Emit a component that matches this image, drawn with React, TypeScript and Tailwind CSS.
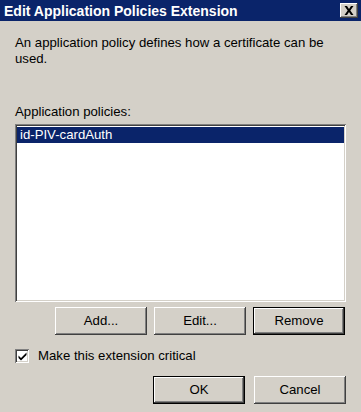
const raised =
  "shadow-[inset_-1px_-1px_#404040,inset_1px_1px_#ffffff,inset_-2px_-2px_#808080,inset_2px_2px_#d4d0c8]";
const raisedDefault =
  "border border-black shadow-[inset_-1px_-1px_#404040,inset_1px_1px_#ffffff,inset_-2px_-2px_#808080]";
const sunken =
  "shadow-[inset_1px_1px_#808080,inset_-1px_-1px_#ffffff,inset_2px_2px_#404040,inset_-2px_-2px_#d4d0c8]";

function Button({ label, isDefault }: { label: string; isDefault?: boolean }) {
  return (
    <button
      className={
        "w-[92px] h-[28px] bg-[#d4d0c8] text-black text-[13.2px] flex items-center justify-center " +
        (isDefault ? raisedDefault : raised)
      }
    >
      {label}
    </button>
  );
}

export default function App() {
  return (
    <div
      className="w-[361px] h-[412px] bg-[#d4d0c8] flex flex-col text-black overflow-hidden"
      style={{ fontFamily: '"Liberation Sans", Arial, sans-serif' }}
    >
      {/* Title bar */}
      <div className="h-[21px] bg-[#0a246a] flex items-center pl-[4px] pr-[3px]">
        <span className="flex-1 text-white font-bold text-[14px] leading-none">
          Edit Application Policies Extension
        </span>
        <div
          className={
            "w-[18px] h-[15px] bg-[#d4d0c8] flex items-center justify-center " + raised
          }
        >
          <svg width="10" height="9" viewBox="0 0 10 9">
            <path d="M0.5 0h2.5l2 3 2-3h2.5l-3.2 4.5 3.2 4.5H7l-2-3-2 3H0.5l3.2-4.5z" fill="#000" />
          </svg>
        </div>
      </div>

      <div className="flex-1 flex flex-col px-[15px] text-[13.2px] leading-[16px]">
        <p className="mt-[14px] pr-[20px]">
          An application policy defines how a certificate can be used.
        </p>

        <div className="mt-[37px]">Application policies:</div>

        <div className={"mt-[4px] h-[178px] bg-white pt-[3px] px-[2px] " + sunken}>
          <div className="h-[16px] bg-[#0a246a] text-white pl-[3px] leading-[16px]">
            id-PIV-cardAuth
          </div>
        </div>

        <div className="mt-[5px] flex justify-end gap-[7px] pr-[1px]">
          <Button label="Add..." />
          <Button label="Edit..." />
          <Button label="Remove" isDefault />
        </div>

        <label className="mt-[13px] flex items-center gap-[9px]">
          <span
            className={"w-[14px] h-[14px] bg-white flex items-center justify-center " + sunken}
          >
            <svg width="9" height="9" viewBox="0 0 9 9">
              <path d="M0.5 3.5l2.5 2.5 5.5-5.5v2.5l-5.5 5.5-2.5-2.5z" fill="#000" />
            </svg>
          </span>
          <span>Make this extension critical</span>
        </label>

        <div className="mt-[12px] flex justify-end gap-[9px]">
          <Button label="OK" isDefault />
          <Button label="Cancel" />
        </div>
      </div>
    </div>
  );
}
